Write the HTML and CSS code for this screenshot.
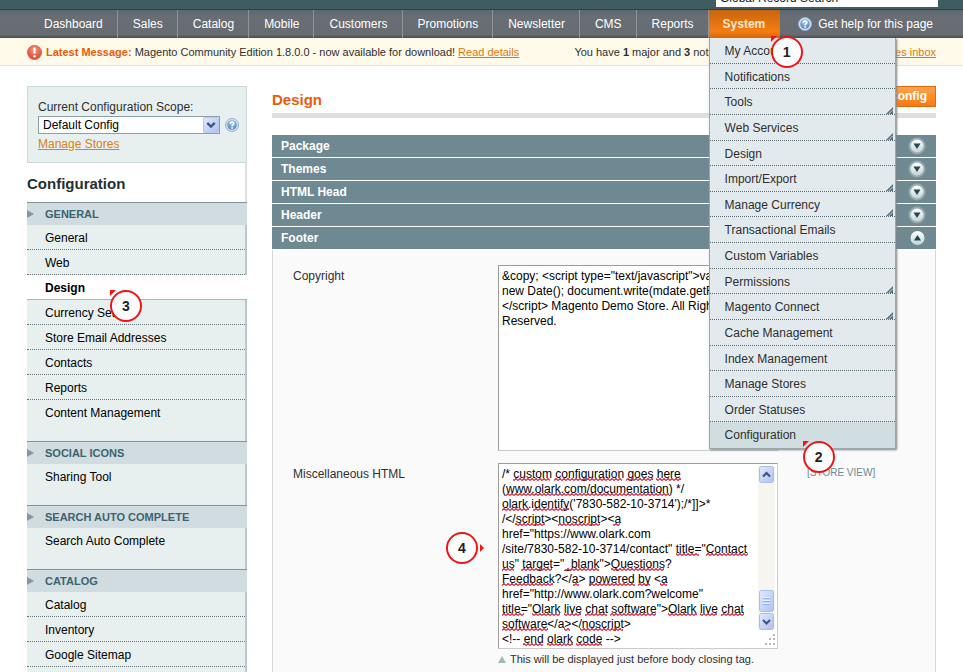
FILE: index.html
```html
<!DOCTYPE html>
<html lang="en">
<head>
<meta charset="utf-8">
<title>Configuration / System / Magento Admin</title>
<link rel="stylesheet" href="styles.css">
</head>
<body>
<svg class="defs" aria-hidden="true">
  <defs>
    <linearGradient id="blue" x1="0" y1="0" x2="1" y2="1"><stop offset="0" stop-color="#e1eafe"/><stop offset="1" stop-color="#aebff3"/></linearGradient>
    <linearGradient id="pale" x1="0" y1="0" x2="0" y2="1"><stop offset="0" stop-color="#fff"/><stop offset="1" stop-color="#c3d3d6"/></linearGradient>
    <radialGradient id="red" cx="50%" cy="30%" r="70%"><stop offset="0" stop-color="#f59a84"/><stop offset="1" stop-color="#d5422f"/></radialGradient>
    <radialGradient id="help" cx="50%" cy="30%" r="70%"><stop offset="0" stop-color="#a9c8e6"/><stop offset="1" stop-color="#4f86bd"/></radialGradient>
    <pattern id="wave" width="4" height="3" patternUnits="userSpaceOnUse"><path d="M0 2.500 L2 .5 L4 2.500" fill="none" stroke="#d8203c" stroke-width="1.200"/></pattern>
    <symbol id="down" viewBox="0 0 18 18"><circle cx="9" cy="9" r="8.500" fill="#96aaaf"/><circle cx="9" cy="9" r="6.500" fill="url(#pale)"/><path d="M5.500 6.500h7L9 12z" fill="#25474f"/></symbol>
    <symbol id="up" viewBox="0 0 18 18"><circle cx="9.500" cy="9" r="7" fill="url(#pale)"/><path d="M6 11.500h7L9.500 6z" fill="#0f4a50"/></symbol>
    <symbol id="q" viewBox="0 0 14 14"><circle cx="7" cy="7" r="6.500" fill="#d8e4f0" stroke="#8fb0d2"/><circle cx="7" cy="7" r="4.800" fill="url(#help)"/><path d="M5.200 5.700C5.200 3.400 8.900 3.400 8.900 5.500C8.900 6.700 7.100 6.700 7.100 8.200" fill="none" stroke="#fff" stroke-width="1.500"/><circle cx="7.100" cy="10" r=".9" fill="#fff"/></symbol>
    <symbol id="corner" viewBox="0 0 8 8"><path d="M0 8L8 0V8z" fill="#54707b"/><path d="M3 8L8 3" stroke="#dfe9ec" stroke-width="1"/></symbol>
  </defs>
</svg>

<header>
  <div class="top"><input class="search" type="text" value="Global Record Search" aria-label="Global Record Search"></div>
  <nav class="nav">
    <a href="#">Dashboard</a><a href="#">Sales</a><a href="#">Catalog</a><a href="#">Mobile</a><a href="#">Customers</a><a href="#">Promotions</a><a href="#">Newsletter</a><a href="#">CMS</a><a href="#">Reports</a>
    <div class="system">
      <a class="active" href="#">System</a>
      <ul class="menu">
        <li><a href="#">My Account</a><span class="mark mark-account"><i class="flag"></i>1</span></li>
        <li><a href="#">Notifications</a></li>
        <li><a href="#">Tools</a><svg class="corner"><use href="#corner"/></svg></li>
        <li><a href="#">Web Services</a><svg class="corner"><use href="#corner"/></svg></li>
        <li><a href="#">Design</a></li>
        <li><a href="#">Import/Export</a><svg class="corner"><use href="#corner"/></svg></li>
        <li><a href="#">Manage Currency</a><svg class="corner"><use href="#corner"/></svg></li>
        <li><a href="#">Transactional Emails</a></li>
        <li><a href="#">Custom Variables</a></li>
        <li><a href="#">Permissions</a><svg class="corner"><use href="#corner"/></svg></li>
        <li><a href="#">Magento Connect</a><svg class="corner"><use href="#corner"/></svg></li>
        <li><a href="#">Cache Management</a></li>
        <li><a href="#">Index Management</a></li>
        <li><a href="#">Manage Stores</a></li>
        <li><a href="#">Order Statuses</a></li>
        <li class="hover"><a href="#">Configuration</a><span class="mark mark-config"><i class="flag"></i>2</span></li>
      </ul>
    </div>
    <a class="help" href="#"><svg class="q"><use href="#q"/></svg>Get help for this page</a>
  </nav>
  <div class="message">
    <svg class="alert" viewBox="0 0 14 14"><circle cx="7" cy="7" r="6.500" fill="url(#red)" stroke="#dd6b58"/><path d="M7 2.500V8" stroke="#fff" stroke-width="2"/><circle cx="7" cy="10.500" r="1.200" fill="#fff"/></svg>
    <p><strong class="latest">Latest Message:</strong> Magento Community Edition 1.8.0.0 - now available for download! <a href="#">Read details</a></p>
    <p class="unread">You have <b>1</b> major and <b>3</b> notice unread message(s). <a href="#">Go to messages inbox</a></p>
  </div>
</header>

<div class="page">
  <aside>
    <div class="scope">
      <label for="scope">Current Configuration Scope:</label>
      <div class="scope-row">
        <span class="pick">
          <select id="scope"><option>Default Config</option></select>
          <svg class="arrow" viewBox="0 0 15 15" aria-hidden="true"><rect x=".5" y=".5" width="14" height="14" rx="1" fill="url(#blue)" stroke="#b8c9f3"/><path d="M4 5.500L7.500 9L11 5.500" fill="none" stroke="#3f5680" stroke-width="2.200"/></svg>
        </span>
        <svg class="q"><use href="#q"/></svg>
      </div>
      <a class="stores" href="#">Manage Stores</a>
    </div>
    <h2>Configuration</h2>
    <h3>GENERAL</h3>
    <ul>
      <li><a href="#">General</a></li>
      <li><a href="#">Web</a></li>
      <li class="current"><a href="#">Design</a><span class="mark mark-design"><i class="flag"></i>3</span></li>
      <li><a href="#">Currency Setup</a></li>
      <li><a href="#">Store Email Addresses</a></li>
      <li><a href="#">Contacts</a></li>
      <li><a href="#">Reports</a></li>
      <li><a href="#">Content Management</a></li>
    </ul>
    <h3>SOCIAL ICONS</h3>
    <ul><li><a href="#">Sharing Tool</a></li></ul>
    <h3>SEARCH AUTO COMPLETE</h3>
    <ul><li><a href="#">Search Auto Complete</a></li></ul>
    <h3>CATALOG</h3>
    <ul>
      <li><a href="#">Catalog</a></li>
      <li><a href="#">Inventory</a></li>
      <li><a href="#">Google Sitemap</a></li>
      <li></li>
    </ul>
  </aside>

  <main>
    <div class="title"><h1>Design</h1><button class="save" type="button">Save Config</button></div>
    <a class="section" href="#">Package<svg><use href="#down"/></svg></a>
    <a class="section" href="#">Themes<svg><use href="#down"/></svg></a>
    <a class="section" href="#">HTML Head<svg><use href="#down"/></svg></a>
    <a class="section" href="#">Header<svg><use href="#down"/></svg></a>
    <a class="section" href="#">Footer<svg><use href="#up"/></svg></a>
    <div class="fields">
      <label for="copyright">Copyright</label>
      <textarea id="copyright" spellcheck="false">&amp;copy; &lt;script type="text/javascript"&gt;var mdate =
new Date(); document.write(mdate.getFullYear());
&lt;/script&gt; Magento Demo Store. All Rights
Reserved.</textarea>
      <span></span>
      <label for="misc">Miscellaneous HTML</label>
      <div>
        <div class="area">
          <textarea id="misc" spellcheck="false">/* custom configuration goes here
(www.olark.com/documentation) */
olark.identify('7830-582-10-3714');/*]]&gt;*
/&lt;/script&gt;&lt;noscript&gt;&lt;a
href="https://www.olark.com
/site/7830-582-10-3714/contact" title="Contact
us" target="_blank"&gt;Questions?
Feedback?&lt;/a&gt; powered by &lt;a
href="http://www.olark.com?welcome"
title="Olark live chat software"&gt;Olark live chat
software&lt;/a&gt;&lt;/noscript&gt;
&lt;!-- end olark code --&gt;</textarea>
          <svg class="waves" viewBox="0 0 280 186" aria-hidden="true" fill="url(#wave)">
            <path d="M15 15h37v3H15zM56 15h68v3H56zM128 15h27v3H128zM158 15h25v3H158zM8 30h163v3H8zM4 45h27v3H4zM35 45h36v3H35zM17 60h30v3H17zM60 60h42v3H60zM115 60h7v3H115zM178 90h23v3H178zM208 90h42v3H208zM4 105h12v3H4zM23 105h31v3H23zM67 105h34v3H67zM113 105h53v3H113zM4 120h51v3H4zM75 120h6v3H75zM91 120h46v3H91zM140 120h12v3H140zM162 120h7v3H162zM4 150h22v3H4zM34 150h28v3H34zM66 150h17v3H66zM87 150h22v3H87zM112 150h46v3H112zM170 150h29v3H170zM202 150h17v3H202zM223 150h23v3H223zM4 165h46v3H4zM66 165h6v3H66zM82 165h43v3H82zM25 180h20v3H25zM49 180h26v3H49zM78 180h26v3H78z"/>
          </svg>
          <svg class="bar" viewBox="0 0 17 164" aria-hidden="true">
            <path d="M0 0h17v164H0z" fill="#f6f5ef"/>
            <g fill="url(#blue)" stroke="#a9bdec"><rect x="1.500" y=".5" width="14" height="16" rx="2"/><rect x="1.500" y="124.500" width="14" height="21" rx="2"/><rect x="1.500" y="147.500" width="14" height="16" rx="2"/></g>
            <path d="M5 10.500L8.500 7L12 10.500M5 154L8.500 157.500L12 154" fill="none" stroke="#3f5680" stroke-width="2.200"/>
            <path d="M5 131.500h7M5 134.500h7M5 137.500h7" stroke="#eef4fe"/><path d="M5 132.500h7M5 135.500h7M5 138.500h7" stroke="#8cb0f8"/>
          </svg>
          <svg class="grip" viewBox="0 0 12 12" aria-hidden="true"><path d="M9 0h2v2H9zM5 4h2v2H5zM9 4h2v2H9zM1 9h2v2H1zM5 9h2v2H5zM9 9h2v2H9z" fill="#b9b7ae"/></svg>
          <span class="mark mark-misc"><i class="flag"></i>4</span>
        </div>
        <p class="note"><svg viewBox="0 0 8 7"><path d="M4 0L8 7H0z" fill="#a3b8b8"/></svg>This will be displayed just before body closing tag.</p>
      </div>
      <span class="view">[STORE VIEW]</span>
    </div>
  </main>
</div>
</body>
</html>
```
FILE: styles.css
```css
* { box-sizing: border-box; }
body { margin: 0; height: 100vh; overflow: hidden; background: #fff; color: #2f2f2f; font: 12px/15px "Liberation Sans", Arial, sans-serif; }
ul, p, h1, h2, h3 { margin: 0; padding: 0; list-style: none; }
a { color: inherit; text-decoration: none; }
.defs { position: absolute; width: 0; height: 0; }

.top { display: flex; justify-content: flex-end; align-items: flex-end; height: 10px; padding: 0 25px 2px 0; overflow: hidden; background: #3f5c62; border-bottom: 1px solid #24434a; }
.search { flex: none; width: 222px; height: 18px; padding: 0 4px; border: 0; font: 12px/15px "Liberation Sans", Arial, sans-serif; background: #fff; color: #222; }
.nav { display: flex; height: 28px; padding-left: 29px; background: linear-gradient(#5c686e, #686e74 25%, #666c72 88%, #444b4e); line-height: 28px; color: #fff; }
.nav > a { padding: 0 14px 0 15px; border-right: 1px solid #8e9498; white-space: nowrap; }
.system { position: relative; z-index: 5; }
.active { display: block; width: 71px; height: 28px; padding-left: 14px; background: linear-gradient(#c8640e, #f57d12 75%, #d96505); font-weight: bold; color: #ffe9c9; }
.nav > .help { display: flex; align-items: center; gap: 6px; margin-left: auto; padding: 0 30px 0 0; border: 0; }
.q { width: 14px; height: 14px; flex: none; }
.menu { position: absolute; left: 0; top: 28px; width: 187px; height: 411px; display: grid; grid-auto-rows: 1fr; background: #e2eaee; border: 1px solid #9aa6aa; border-top: 0; box-shadow: 1px 1px 2px #7c8386; color: #2f2f2f; line-height: 26px; }
.menu li { position: relative; min-height: 0; padding-left: 15px; border-bottom: 1px dotted #5c6c74; }
.menu .hover { background: #d0dde1; border: 0; }
.menu a { display: block; height: 24px; }
.corner { position: absolute; right: 2px; bottom: 0; width: 7px; height: 7px; }

.message { display: flex; align-items: center; height: 28px; padding: 1px 27px 0; background: #fff9e9; border-bottom: 1px solid #eee2be; font-size: 11px; white-space: nowrap; }
.message a { color: #d97a10; text-decoration: underline; }
.message .unread { margin-left: auto; }
.latest { color: #e85c0a; }
.alert { width: 15px; height: 15px; margin-right: 4px; flex: none; }

.page { display: flex; gap: 25px; padding: 20px 27px 0; }
aside { flex: none; width: 220px; color: #000; }
.scope { height: 77px; padding: 13px 7px 0 10px; background: #e7efef; border: 1px solid #cbd9dc; color: #2f2f2f; }
.scope label { display: block; }
.scope-row { display: flex; align-items: center; gap: 5px; height: 18px; margin: 1px 0; }
.pick { position: relative; display: block; width: 182px; height: 18px; }
.pick select { appearance: none; display: block; width: 100%; height: 100%; padding: 0 4px; border: 1px solid #8aa0ab; border-radius: 0; background: #fff; color: #000; font: 12px/15px "Liberation Sans", Arial, sans-serif; }
.arrow { position: absolute; right: 1px; top: 1px; width: 16px; height: 16px; pointer-events: none; }
.stores { display: block; margin-top: 3px; color: #d98216; text-decoration: underline; }
h2 { height: 39px; padding-top: 13px; border-right: 2px solid #dde3e5; font-size: 15px; color: #253033; }
h3 { position: relative; height: 23px; padding-left: 18px; background: #d0dcdf; border-top: 1px solid #80959c; color: #3a6470; font-size: 11px; line-height: 22px; }
h3::before { content: ""; position: absolute; left: 0; top: 7px; border: 4px solid transparent; border-left: 7px solid #82989c; border-right: 0; }
aside ul { padding-bottom: 16px; background: #e7efef; border-right: 2px solid #b8c8cc; }
aside li { position: relative; height: 25px; padding-left: 18px; border-bottom: 1px dotted #647478; line-height: 26px; }
aside li:last-child { border-bottom: 0; }
aside .current { margin-right: -2px; background: #fff; border-bottom: 1px solid #a9b9bd; font-weight: bold; }

main { flex: 1; min-width: 0; }
.title { display: flex; justify-content: space-between; height: 32px; border-bottom: 5px solid #dfdfdf; margin-bottom: 17px; }
h1 { padding-top: 5px; font-size: 15px; line-height: 17px; color: #e85c0a; }
.save { height: 21px; padding: 0 8px; border: 1px solid #dd6a10; background: linear-gradient(#ffa24d, #f77a12); color: #fff; font: bold 12px/15px "Liberation Sans", Arial, sans-serif; }
.section { display: flex; justify-content: space-between; align-items: center; height: 23px; padding: 0 10px 0 9px; background: #6f8992; border-bottom: 1px solid #fff; color: #fff; font-weight: bold; line-height: 23px; }
.section svg { width: 18px; height: 18px; }
.fields { display: grid; grid-template-columns: 205px 280px 1fr; row-gap: 12px; align-items: start; padding: 15px 20px 40px; background: #fafafa; border: 1px solid #d6d6d6; border-top: 0; }
.fields > label { padding-top: 4px; }
textarea { display: block; width: 280px; height: 186px; padding: 3px; border: 1px solid #9c9c9c; border-right-color: #ccc; border-bottom-color: #ccc; resize: none; overflow: hidden; white-space: pre; background: #fff; color: #000; font: 12px/15px "Liberation Sans", Arial, sans-serif; }
.area { position: relative; }
.waves { position: absolute; left: 0; top: 0; width: 280px; height: 186px; pointer-events: none; }
.bar { position: absolute; right: 3px; top: 3px; width: 17px; height: 164px; }
.grip { position: absolute; right: 2px; bottom: 3px; width: 12px; height: 12px; }
.note { display: flex; align-items: center; gap: 4px; padding-top: 3px; font-size: 11px; white-space: nowrap; }
.note svg { width: 8px; height: 7px; }
.view { padding: 2px 0 0 29px; color: #6f8992; font-size: 10px; }

.mark { position: absolute; z-index: 9; width: 32px; height: 32px; border: 2px solid #f01414; border-radius: 50%; background: #fff; color: #222; font-size: 14px; font-weight: bold; line-height: 28px; text-align: center; }
.flag { position: absolute; left: -2px; top: -2px; border: 3px solid transparent; border-left-color: #f01414; border-top-color: #f01414; }
.mark-account { left: 61px; top: -2px; }
.mark-config { left: 93px; top: 19px; }
.mark-design { left: 83px; top: 15px; }
.mark-misc { left: -52px; top: 69px; }
.mark-misc .flag { left: 32px; top: 10px; border: 4px solid transparent; border-left-color: #f01414; border-right: 0; }
```
